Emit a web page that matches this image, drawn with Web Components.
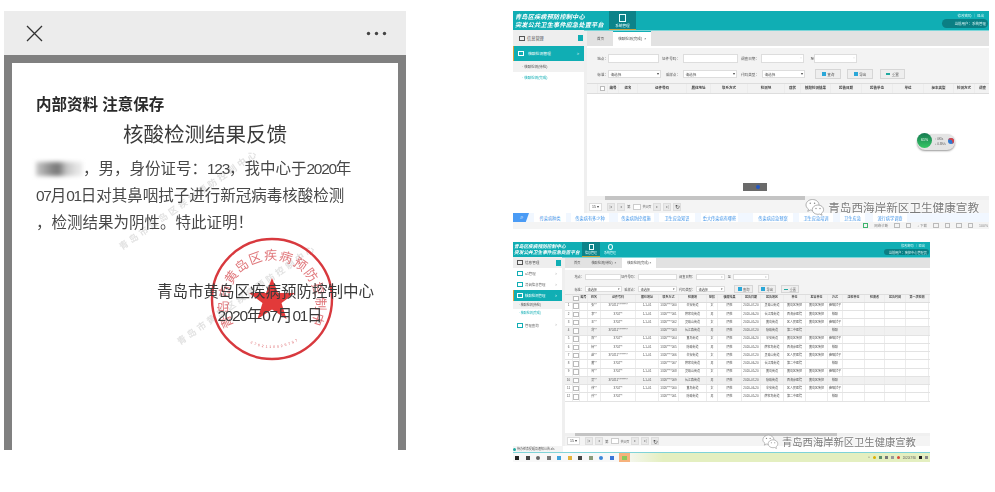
<!DOCTYPE html>
<html lang="zh">
<head>
<meta charset="utf-8">
<title>核酸检测结果反馈</title>
<style>
    html, body { margin: 0; background: #fff; }
    body {
        width: 995px;
        height: 492px;
        box-sizing: border-box;
        overflow: hidden;
        padding: 11px 0 0 4px;
        display: grid;
        grid-template-columns: 402px 476px;
        column-gap: 107px;
        align-items: start;
        font-family: "Liberation Sans", "Noto Sans CJK SC", sans-serif;
    }
    .right { display: flex; flex-direction: column; gap: 12px; align-items: flex-start; }
</style>
</head>
<body>
<report-phone></report-phone>
<div class="right">
    <console-top></console-top>
    <console-bottom></console-bottom>
</div>

<script>
const CJK = '"Liberation Sans", "Noto Sans CJK SC", sans-serif';

// wechat mark + gray caption that lies over the screenshots
class WxMark extends HTMLElement {
    constructor() {
        super();
        this.attachShadow({ mode: "open" });
        const size = this.getAttribute("size") || "12";
        const icon = this.getAttribute("icon") || "20";
        this.shadowRoot.innerHTML = `
        <style>
            :host { display: flex; align-items: center; gap: 3px; position: absolute; white-space: nowrap; filter: blur(.3px); }
            span { font: ${size}px ${CJK}; color: #7b7b7b; text-shadow: 0 0 2px #fff, 0 0 2px #fff; }
        </style>
        <svg width="${icon}" height="${icon}" viewBox="0 0 24 24">
            <path d="M9 3C4.6 3 1.2 5.9 1.2 9.5c0 2.1 1.1 3.8 3 5l-.9 2.7 3.1-1.6c.9.3 1.7.4 2.6.4 4.4 0 7.8-2.9 7.8-6.5S13.400 3 9 3z" fill="#fff" stroke="#999" stroke-width=".9"/>
            <path d="M15.500 9.600c-3.800 0-6.800 2.500-6.800 5.600s3 5.600 6.800 5.600c.8 0 1.500-.1 2.200-.3l2.700 1.400-.7-2.300c1.600-1 2.600-2.600 2.600-4.400 0-3.100-3-5.600-6.800-5.600z" fill="#fff" stroke="#999" stroke-width=".9"/>
            <circle cx="6.300" cy="7.600" r=".9" fill="#888"/><circle cx="11.500" cy="7.600" r=".9" fill="#888"/>
            <circle cx="13.200" cy="13.800" r=".8" fill="#888"/><circle cx="18" cy="13.800" r=".8" fill="#888"/>
        </svg>
        <span><slot></slot></span>
        `;
    }
}
customElements.define("wx-mark", WxMark);

class ReportStamp extends HTMLElement {
    constructor() {
        super();
        this.attachShadow({ mode: "open" });
        this.shadowRoot.innerHTML = `
        <style>
            :host { display: block; position: absolute; left: 198px; top: 173px; width: 124px; height: 126px; }
            svg { display: block; }
            text { font-family: ${CJK}; fill: #d8555a; }
        </style>
        <svg width="124" height="126" viewBox="0 0 124 126">
            <defs>
                <path id="top" d="M24 90 A44 44 0 1 1 100 90"/>
                <path id="bot" d="M22 92 A50 50 0 0 0 102 92"/>
            </defs>
            <circle cx="62" cy="63" r="60" fill="none" stroke="#d8393e" stroke-width="2.400"/>
            <text font-size="13" opacity=".8"><textPath href="#top" textLength="196" lengthAdjust="spacing">青岛市黄岛区疾病预防控制中心</textPath></text>
            <text font-size="3.500" letter-spacing="2"><textPath href="#bot" startOffset="24">3702110025757</textPath></text>
            <polygon points="62,42 68,57 85,57 71.500,67 76.500,83 62,73.500 47.500,83 52.500,67 39,57 56,57" fill="#e23a3a"/>
        </svg>
        `;
    }
}
customElements.define("report-stamp", ReportStamp);

class ReportPhone extends HTMLElement {
    constructor() {
        super();
        this.attachShadow({ mode: "open" });
        this.shadowRoot.innerHTML = `
        <style>
            :host { display: block; width: 402px; height: 439px; color: #2b2b2b; font-family: ${CJK}; }
            header {
                height: 44px;
                background: #ececec;
                display: flex;
                align-items: center;
                justify-content: space-between;
                padding: 0 19px 0 22px;
                box-sizing: border-box;
                filter: blur(.3px);
            }
            .frame {
                height: 395px;
                box-sizing: border-box;
                border: 8px solid #808080;
                border-bottom: 0;
                background: #fff;
                position: relative;
                overflow: hidden;
                padding: 32px 0 0 24px;
                filter: blur(.35px);
            }
            .wm {
                position: absolute;
                font-size: 9px;
                font-weight: bold;
                letter-spacing: 3px;
                white-space: nowrap;
                color: #e2e2e2;
                transform: rotate(-35deg);
                transform-origin: left center;
            }
            .lead, .title, p, .sign { position: relative; }
            .lead { font-size: 15.500px; font-weight: bold; line-height: 20px; color: #2a2a2a; }
            .title { font-size: 20.500px; line-height: 30px; margin-top: 5px; padding-left: 87px; color: #3a3a3a; }
            p { margin: 0; font-size: 15.500px; line-height: 27px; color: #484848; white-space: nowrap; }
            p.first { margin-top: 5px; display: flex; align-items: center; }
            .num { letter-spacing: -1.300px; }
            .mask {
                width: 46px;
                height: 14px;
                margin-right: 1px;
                background: linear-gradient(90deg, #c9c9c9, #8f8f8f 30%, #777 48%, #c4c4c4 66%, #e6e6e6 90%);
                filter: blur(2px);
            }
            .sign { position: absolute; left: 145px; top: 217px; width: 217px; text-align: center; font-size: 15.500px; line-height: 24px; color: #3a3a3a; }
            .date { display: block; padding-left: 9px; }
        </style>
        <header>
            <svg width="17" height="17" viewBox="0 0 17 17"><path d="M1 1 L16 16 M16 1 L1 16" stroke="#333" stroke-width="1.300" fill="none"/></svg>
            <svg width="21" height="5" viewBox="0 0 21 5"><circle cx="2.500" cy="2.500" r="1.700" fill="#444"/><circle cx="10.500" cy="2.500" r="1.700" fill="#444"/><circle cx="18.500" cy="2.500" r="1.700" fill="#444"/></svg>
        </header>
        <div class="frame">
            <div class="wm" style="left:108px;top:178px">青岛市黄岛区疾病预防控制中心</div>
            <div class="wm" style="left:166px;top:273px">青岛市黄岛区疾病预防控制中心</div>
            <report-stamp></report-stamp>
            <div class="lead">内部资料 注意保存</div>
            <div class="title">核酸检测结果反馈</div>
            <p class="first"><span class="mask"></span>，男，身份证号：<span class="num">123</span>，我中心于<span class="num">2020</span>年</p>
            <p><span class="num">07</span>月<span class="num">01</span>日对其鼻咽拭子进行新冠病毒核酸检测</p>
            <p>，检测结果为阴性。特此证明！</p>
            <div class="sign">青岛市黄岛区疾病预防控制中心<span class="date"><span class="num">2020</span>年<span class="num">07</span>月<span class="num">01</span>日</span></div>
        </div>
        `;
    }
}
customElements.define("report-phone", ReportPhone);

// table, columns come in as a grid template, rows from the owner
class DataGrid extends HTMLElement {
    constructor() {
        super();
        this.attachShadow({ mode: "open" });
    }
    fill(cols, head, rows, rowH) {
        const cell = c => `<div>${c}</div>`;
        const body = rows.map((r, i) =>
            `<div class="row ${i === 3 || i === 9 ? "alt" : ""}">${r.map(cell).join("")}</div>`).join("");
        this.shadowRoot.innerHTML = `
        <style>
            :host { display: block; font: 3.500px ${CJK}; color: #555; }
            .row { display: grid; grid-template-columns: ${cols}; height: ${rowH}px; border-bottom: .5px solid #e3e3e3; box-sizing: border-box; }
            .row.alt { background: #f1f1f1; }
            .row div { display: flex; align-items: center; justify-content: center; text-align: center; line-height: 3.600px; overflow: hidden; white-space: nowrap; border-right: .5px solid #ececec; }
            .head { background: #f2f2f2; font-weight: bold; color: #444; border-top: .5px solid #ddd; border-bottom: 1px solid #ddd; }
        </style>
        <div class="row head" style="height:var(--head-h)">${head.map(cell).join("")}</div>
        ${body}
        `;
    }
}
customElements.define("data-grid", DataGrid);

class PagerBar extends HTMLElement {
    constructor() {
        super();
        this.attachShadow({ mode: "open" });
        this.shadowRoot.innerHTML = `
        <style>
            :host { display: flex; align-items: center; gap: 2px; height: 100%; padding-left: 2px; box-sizing: border-box; font: 3.500px ${CJK}; color: #666; background: #f4f4f4; }
            b { display: flex; align-items: center; justify-content: center; width: 8px; height: 8px; background: #e9e9e9; border: .5px solid #ddd; box-sizing: border-box; font-weight: normal; color: #999; }
            .sel { width: 13px; background: #fff; color: #444; margin-right: 3px; }
            .in { width: 8px; height: 6px; background: #fff; border: .5px solid #ccc; box-sizing: border-box; }
            .re { color: #444; font-size: 6px; }
        </style>
        <b class="sel">15 ▾</b><b>|◂</b><b>◂</b><span>第</span><span class="in"></span><span>共0页</span><b>▸</b><b>▸|</b><b class="re">↻</b>
        `;
    }
}
customElements.define("pager-bar", PagerBar);

// shared styles of the two console screenshots
const consoleCss = `
    :host { display: block; position: relative; overflow: hidden; font-family: ${CJK}; color: #555; background: #fff; }
    .shot { filter: blur(.5px); height: 100%; display: flex; flex-direction: column; }
    .bar { background: #10aeb4; display: flex; flex: none; color: #fff; position: relative; }
    .brand { font-weight: bold; font-style: italic; letter-spacing: .25px; white-space: nowrap; }
    .mod { display: flex; flex-direction: column; align-items: center; justify-content: center; color: #e8ffff; }
    .mod.on { background: #0c8389; box-shadow: inset 0 -1px #c7a33f; }
    .user { position: absolute; right: 1px; display: flex; flex-direction: column; align-items: flex-end; font-size: 3.500px; color: #d8f6f6; }
    .user span:first-child { padding-right: 4px; }
    .pill { background: #0b7f84; border-radius: 5px; display: flex; align-items: center; justify-content: flex-end; padding-right: 2px; box-sizing: border-box; white-space: nowrap; }
    .mid { flex: 1; min-height: 0; display: flex; }
    .side { flex: none; background: #fff; border-right: 3px solid #efefef; display: flex; flex-direction: column; font-size: 4px; }
    .side h4 { margin: 0; font-size: 4.200px; font-weight: normal; background: #eee; display: flex; align-items: center; gap: 2px; padding-left: 6px; position: relative; flex: none; }
    .side h4 i { position: absolute; right: 1px; top: 50%; margin-top: -3px; width: 5px; height: 6px; background: #10aeb4; }
    .ico { flex: none; width: 6px; height: 5px; border: .8px solid currentColor; box-sizing: border-box; display: block; }
    .item { display: flex; align-items: center; gap: 4px; padding-left: 5px; flex: none; position: relative; color: #666; }
    .item .ico { color: #10aeb4; }
    .item::after { content: ">"; position: absolute; right: 5px; color: #aaa; }
    .item.on { background: #10aeb4; color: #fff; box-shadow: inset 1px 0 #e0a33a; }
    .item.on .ico { color: #fff; }
    .item.on::after { color: #fff; }
    .subs { background: #f1f1f1; flex: none; display: flex; flex-direction: column; font-size: 3.500px; }
    .subs div { padding-left: 9px; display: flex; align-items: center; flex: 1; white-space: nowrap; }
    .subs .on { background: #fff; color: #10aeb4; }
    .main { flex: 1; min-width: 0; display: flex; flex-direction: column; }
    .tabs { background: #e2e2e2; display: flex; align-items: flex-end; flex: none; font-size: 3.600px; padding-left: 5px; gap: 4px; }
    .tabs span { height: 100%; display: flex; align-items: center; padding: 0 5px; white-space: nowrap; }
    .tabs .on { background: #fff; box-shadow: inset 0 1px #10aeb4; }
    .form { background: #f3f3f3; flex: none; display: flex; flex-direction: column; font-size: 3.600px; border-top: 2px solid #fff; box-sizing: border-box; }
    .line { display: flex; align-items: center; }
    .line span { white-space: nowrap; text-align: right; flex: none; }
    .in { flex: none; background: #fff; border: .5px solid #ddd; box-sizing: border-box; display: flex; align-items: center; justify-content: space-between; padding: 0 1.500px; color: #555; white-space: nowrap; }
    .btn { flex: none; background: #eee; border: .5px solid #d6d6d6; box-sizing: border-box; display: flex; align-items: center; justify-content: center; gap: 1.500px; }
    .btn i { width: 4px; height: 4px; background: #2aa7d8; display: block; }
    .hbar { flex: none; background: #f0f0f0; }
    .hbar div { height: 100%; background: #c4c4c4; }
`;

const NAMES = ["张**", "李**", "王**", "刘**", "陈**", "杨**", "赵**", "黄**", "周**", "吴**", "徐**", "孙**"];
const PLACE = ["辛安街道", "薛家岛街道", "灵珠山街道", "长江路街道", "黄岛街道", "隐珠街道"];
const UNIT = ["黄岛区疾控", "西海岸医院", "区人民医院", "第二中医院"];

class ConsoleTop extends HTMLElement {
    constructor() {
        super();
        this.attachShadow({ mode: "open" });
        this.shadowRoot.innerHTML = `
        <style>
            ${consoleCss}
            :host { width: 476px; height: 219px; }
            .bar { height: 19px; padding-left: 2px; box-shadow: 0 1px #7dd6d9; }
            .brand { font-size: 6.100px; line-height: 7.500px; width: 94px; padding-top: 2px; }
            .mod { width: 27px; font-size: 3.600px; gap: 1px; }
            .mod .ico { width: 7px; height: 8px; }
            .user { top: 2px; gap: 1px; }
            .pill { width: 46px; height: 9px; }
            .mid { height: 183px; flex: none; }
            .side { width: 71px; }
            .side h4 { height: 16px; box-sizing: border-box; }
            .item { height: 15px; font-size: 3.800px; margin-top: 0; }
            .subs { height: 22px; }
            .tabs { height: 15px; margin-top: 1px; }
            .form { height: 37px; padding: 5px 0 0 9px; gap: 6px; }
            .line { height: 10px; }
            .main data-grid { --head-h: 11px; flex: none; }
            .blank { flex: 1; background: #fff; }
            .hbar { height: 4px; padding-left: 18px; }
            .hbar div { width: 200px; }
            pager-bar { height: 13px; flex: none; }
            .seek { flex: none; height: 9px; background: #f1f7ff; display: flex; align-items: center; font-size: 4.200px; color: #3f93e8; position: relative; }
            .seek b { width: 16px; height: 100%; background: #4a9bf5; clip-path: polygon(0 0, 100% 0, 80% 100%, 0 100%); color: #fff; font-size: 6px; font-weight: normal; display: flex; align-items: center; justify-content: center; }
            .seek span { position: absolute; top: 0; height: 100%; display: flex; align-items: center; justify-content: center; background: #fff; white-space: nowrap; }
            .status { flex: none; height: 7px; background: #f4f4f4; display: flex; align-items: center; justify-content: flex-end; gap: 6px; padding-right: 1px; font-size: 3.500px; color: #888; }
            .status i { width: 3.500px; height: 3px; border: .5px solid #bbb; display: block; }
            .chip { position: absolute; left: 230px; top: 172px; width: 24px; height: 8px; background: #6a6a6a; filter: blur(.4px); }
            .chip::after { content: ""; position: absolute; left: 13px; top: 2px; width: 4px; height: 4px; border-radius: 50%; background: #2358c4; }
            .meter { position: absolute; left: 404px; top: 123px; width: 38px; height: 16px; border-radius: 8px; background: #e4e4e4; box-shadow: 0 1px 2px #999; filter: blur(.4px); }
            .meter em { position: absolute; left: 0; top: -1px; width: 15px; height: 15px; border-radius: 50%; background: linear-gradient(#167a52, #35c764); color: #fff; font: 3.500px/15px ${CJK}; text-align: center; }
            .meter u { position: absolute; right: 1.500px; top: 4px; width: 6px; height: 6px; border-radius: 50%; background: #2f78d0; box-shadow: inset -1.500px 1.500px #e04040; }
            .meter s { position: absolute; left: 18px; text-decoration: none; font: 3px ${CJK}; color: #555; white-space: nowrap; }
            wx-mark { right: 10px; top: 186px; }
        </style>
        <div class="shot">
            <div class="bar">
                <div class="brand">青岛区疾病预防控制中心<br>突发公共卫生事件应急处置平台</div>
                <div class="mod on"><i class="ico"></i>系统管理</div>
                <div class="user"><span>修改密码 ｜ 退出</span><span class="pill">当前用户：系统管理</span></div>
            </div>
            <div class="mid">
                <div class="side">
                    <h4><i></i><span class="ico"></span>信息管理</h4>
                    <div class="item on"><span class="ico"></span>核酸检测管理</div>
                    <div class="subs"><div>· 核酸检测(待检)</div><div class="on">· 核酸检测(完成)</div></div>
                </div>
                <div class="main">
                    <div class="tabs"><span>首页</span><span class="on">核酸检测(完成) &nbsp;×</span></div>
                    <div class="form">
                        <div class="line">
                            <span style="width:12px">地点：</span>
                            <div class="in" style="width:51px;height:9px"></div>
                            <span style="width:21px">证件号码：</span>
                            <div class="in" style="width:55px;height:9px;margin-left:3px"></div>
                            <span style="width:21px">调查日期：</span>
                            <div class="in" style="width:43px;height:9px;margin-left:2px"><b></b>▫</div>
                            <span style="width:10px">至</span>
                            <div class="in" style="width:43px;height:9px;margin-left:0"><b></b>▫</div>
                        </div>
                        <div class="line">
                            <span style="width:12px">标准：</span>
                            <div class="in" style="width:53px;height:8px">请选择<b>▾</b></div>
                            <span style="width:19px">采样点：</span>
                            <div class="in" style="width:54px;height:8px;margin-left:3px">请选择<b>▾</b></div>
                            <span style="width:22px">代码类型：</span>
                            <div class="in" style="width:43px;height:8px;margin-left:3px">请选择<b>▾</b></div>
                            <div class="btn" style="width:26px;height:10px;margin-left:10px"><i></i>查询</div>
                            <div class="btn" style="width:26px;height:10px;margin-left:6px"><i></i>导出</div>
                            <div class="btn" style="width:25px;height:10px;margin-left:7px"><i style="background:#20a9a0;height:1.500px"></i>重置</div>
                        </div>
                    </div>
                    <data-grid></data-grid>
                    <div class="blank"></div>
                    <div class="hbar"><div></div></div>
                    <pager-bar></pager-bar>
                </div>
            </div>
            <div class="seek">
                <b>⌕</b>
                <span style="left:21px;width:32px">传染病种类</span>
                <span style="left:58px;width:38px">传染病有多少种</span>
                <span style="left:105px;width:36px">传染病防控措施</span>
                <span style="left:146px;width:36px">卫生应急知识</span>
                <span style="left:188px;width:37px">重大传染病有哪些</span>
                <span style="left:240px;width:40px">传染病应急预案</span>
                <span style="left:286px;width:34px">卫生应急培训</span>
                <span style="left:327px;width:25px">卫生应急</span>
                <span style="left:360px;width:34px">流行病学调查</span>
            </div>
            <div class="status"><i style="border-color:#3db46d"></i><span>网络诊断</span><i></i><i></i><span>↓ 下载</span><i></i><i></i><i></i><i></i><span>100%</span></div>
        </div>
        <div class="chip"></div>
        <div class="meter"><em>61%</em><s style="top:3px">↑ 0K/s</s><s style="top:8px">↓ 0.3K/s</s><u></u></div>
        <wx-mark size="11.600" icon="20">青岛西海岸新区卫生健康宣教</wx-mark>
        `;
        this.shadowRoot.querySelector("data-grid").fill(
            "11px 10px 11px 19px 49px 24px 37px 37px 16px 30px 31px 31px 31px 30px 21px 16px",
            ["", "<span style='width:3.500px;height:3.500px;border:.5px solid #bbb;background:#fff'></span>", "编号", "姓名", "证件号码", "居住地址", "联系方式", "检测地", "症状", "核酸检测结果", "报告日期", "报告单位", "单位", "标本类型", "检测方式", "调查"],
            [], 11);
    }
}
customElements.define("console-top", ConsoleTop);

class ConsoleBottom extends HTMLElement {
    constructor() {
        super();
        this.attachShadow({ mode: "open" });
        const box = "<span style='width:3.500px;height:3.500px;border:.5px solid #bbb;background:#fff'></span>";
        const rows = NAMES.map((n, i) => [
            i + 1, box, "", n,
            i % 3 === 0 ? "370211********" : "3702**",
            i % 4 === 3 ? "" : "1-1-01",
            "1326****00" + (i % 10),
            PLACE[i % 6],
            i % 2 ? "男" : "女",
            "阴性",
            "2020-0" + (7 - i % 3) + "-20",
            PLACE[(i + 2) % 6],
            UNIT[i % 4],
            i % 4 === 3 ? "" : "黄岛区疾控",
            i % 2 ? "核酸" : "鼻咽拭子",
            "", "", "", "", ""
        ]);
        this.shadowRoot.innerHTML = `
        <style>
            ${consoleCss}
            :host { width: 417px; height: 220px; }
            .bar { height: 15px; padding-left: 1px; box-shadow: 0 1px #7dd6d9; }
            .brand { font-size: 4.700px; line-height: 6px; width: 67px; padding-top: 1.500px; letter-spacing: 0; }
            .mod { width: 18px; font-size: 3px; gap: 1px; margin-left: 1px; }
            .mod .ico { width: 5px; height: 6px; }
            .user { top: 1px; gap: 1px; font-size: 3.200px; }
            .pill { width: 45px; height: 6px; }
            .mid { flex: 1; }
            .side { width: 49px; }
            .side h4 { height: 11px; box-sizing: border-box; font-size: 3.600px; padding-left: 4px; }
            .item { font-size: 3.400px; gap: 2px; padding-left: 4px; }
            .subs { height: 16px; }
            .subs div { padding-left: 6px; font-size: 3px; }
            .tabs { height: 11px; padding-left: 4px; gap: 1px; font-size: 3.200px; }
            .form { height: 26px; padding: 2px 0 0 6px; gap: 3px; font-size: 3.200px; }
            .line { height: 10px; }
            .main data-grid { --head-h: 8.500px; flex: none; font-size: 3px; }
            .blank { flex: 1; }
            .hbar { height: 3px; padding-left: 10px; }
            .hbar div { width: 262px; }
            pager-bar { height: 10px; flex: none; }
            .task { flex: none; height: 6px; font-size: 3px; display: flex; }
            .task div { background: #f4f4f4; width: 50px; display: flex; align-items: center; gap: 1px; white-space: nowrap; }
            .task i { width: 3px; height: 3px; border-radius: 50%; background: #20a9a0; display: block; }
            .tb { flex: none; height: 10px; border-top: 1px solid #7fd3d8; box-sizing: border-box; background: linear-gradient(90deg, #f8f8f8 0, #f8f8f8 26%, #e4efc0 36%, #e4efc0 100%); display: flex; align-items: center; padding-left: 2px; gap: 6.500px; font-size: 3px; position: relative; }
            .tb i { width: 4px; height: 4px; display: block; flex: none; }
            .tb .orange { position: absolute; left: 106px; top: 0; width: 11px; height: 100%; background: #f7b27c; }
            .tb .orange::after { content: ""; position: absolute; left: 3px; top: 2.500px; width: 5px; height: 4px; background: #8dc95b; }
            .tray { position: absolute; right: 2px; top: 0; height: 100%; display: flex; align-items: center; gap: 3px; color: #555; }
            .tray i { width: 3px; height: 3px; }
            wx-mark { left: 249px; top: 191px; }
        </style>
        <div class="shot">
            <div class="bar">
                <div class="brand">青岛区疾病预防控制中心<br>突发公共卫生事件应急处置平台</div>
                <div class="mod on"><i class="ico"></i>信息管理</div>
                <div class="mod"><i class="ico" style="border-radius:50%"></i>系统管理</div>
                <div class="user"><span>修改密码 ｜ 退出</span><span class="pill">当前用户：疾控中心管理员</span></div>
            </div>
            <div class="mid">
                <div class="side">
                    <h4><i></i><span class="ico"></span>信息管理</h4>
                    <div class="item" style="height:11px"><span class="ico"></span>a1管理</div>
                    <div class="item" style="height:11px"><span class="ico"></span>流调信息管理</div>
                    <div class="item on" style="height:11px"><span class="ico"></span>核酸检测管理</div>
                    <div class="subs"><div>· 核酸检测(待检)</div><div class="on">· 核酸检测(完成)</div></div>
                    <div class="item" style="height:10px;margin-top:3px"><span class="ico"></span>管理查询</div>
                </div>
                <div class="main">
                    <div class="tabs"><span>首页</span><span>核酸检测(待检) &nbsp;×</span><span class="on">核酸检测(完成) ×</span></div>
                    <div class="form">
                        <div class="line">
                            <span style="width:13px">地点：</span>
                            <div class="in" style="width:36px;height:6px;margin-left:1px"></div>
                            <span style="width:16px">证件号码：</span>
                            <div class="in" style="width:39px;height:6px;margin-left:1px"></div>
                            <span style="width:18px">调查日期：</span>
                            <div class="in" style="width:29px;height:6px;margin-left:1px"><b></b>▫</div>
                            <span style="width:6px">至</span>
                            <div class="in" style="width:36px;height:6px;margin-left:2px"><b></b>▫</div>
                        </div>
                        <div class="line">
                            <span style="width:13px">标准：</span>
                            <div class="in" style="width:37px;height:6px;margin-left:1px">请选择<b>▾</b></div>
                            <span style="width:15px">采样点：</span>
                            <div class="in" style="width:39px;height:6px;margin-left:1px">请选择<b>▾</b></div>
                            <span style="width:18px">代码类型：</span>
                            <div class="in" style="width:29px;height:6px;margin-left:1px">请选择<b>▾</b></div>
                            <div class="btn" style="width:19px;height:8px;margin-left:9px"><i></i>查询</div>
                            <div class="btn" style="width:18px;height:8px;margin-left:5px"><i></i>导出</div>
                            <div class="btn" style="width:18px;height:8px;margin-left:5px"><i style="background:#20a9a0;height:1.500px"></i>重置</div>
                        </div>
                    </div>
                    <data-grid></data-grid>
                    <div class="blank"></div>
                    <div class="hbar"><div></div></div>
                    <pager-bar></pager-bar>
                </div>
            </div>
            <div class="task"><div><i></i>待办任务提醒及通知公告.xls</div></div>
            <div class="tb">
                <i style="background:#222"></i><i style="background:#444"></i><i style="background:#666;border-radius:50%"></i><i style="background:#777"></i><i style="background:#3ea2dc"></i><i style="background:#e3b23c"></i><i style="background:#444"></i><i style="background:#8a9a7a"></i><i style="background:#3b86d8;border-radius:50%"></i><i style="background:#3b76d8"></i>
                <span class="orange"></span>
                <div class="tray"><span>^</span><i style="background:#d9b100;border-radius:50%"></i><i style="background:#5b8f6a"></i><i style="background:#777"></i><i style="background:#999"></i><i style="background:#d84a3a;border-radius:50%"></i><span>2020/7/30</span><i style="background:#222"></i><i style="background:#888"></i></div>
            </div>
        </div>
        <wx-mark size="10.300" icon="17">青岛西海岸新区卫生健康宣教</wx-mark>
        `;
        this.shadowRoot.querySelector("data-grid").fill(
            "8px 7px 8px 13px 35px 23px 20px 28px 11px 24px 19px 23px 22px 22px 15px 22px 20px 21px 23px 3px",
            ["", box, "编号", "姓名", "证件号码", "居住地址", "联系方式", "检测地", "症状", "核酸结果", "报告日期", "报告地区", "单位", "报告单位", "方式", "送检单位", "检测者", "报告时间", "第一次检测", ""],
            rows, 8.25);
    }
}
customElements.define("console-bottom", ConsoleBottom);
</script>
</body>
</html>
